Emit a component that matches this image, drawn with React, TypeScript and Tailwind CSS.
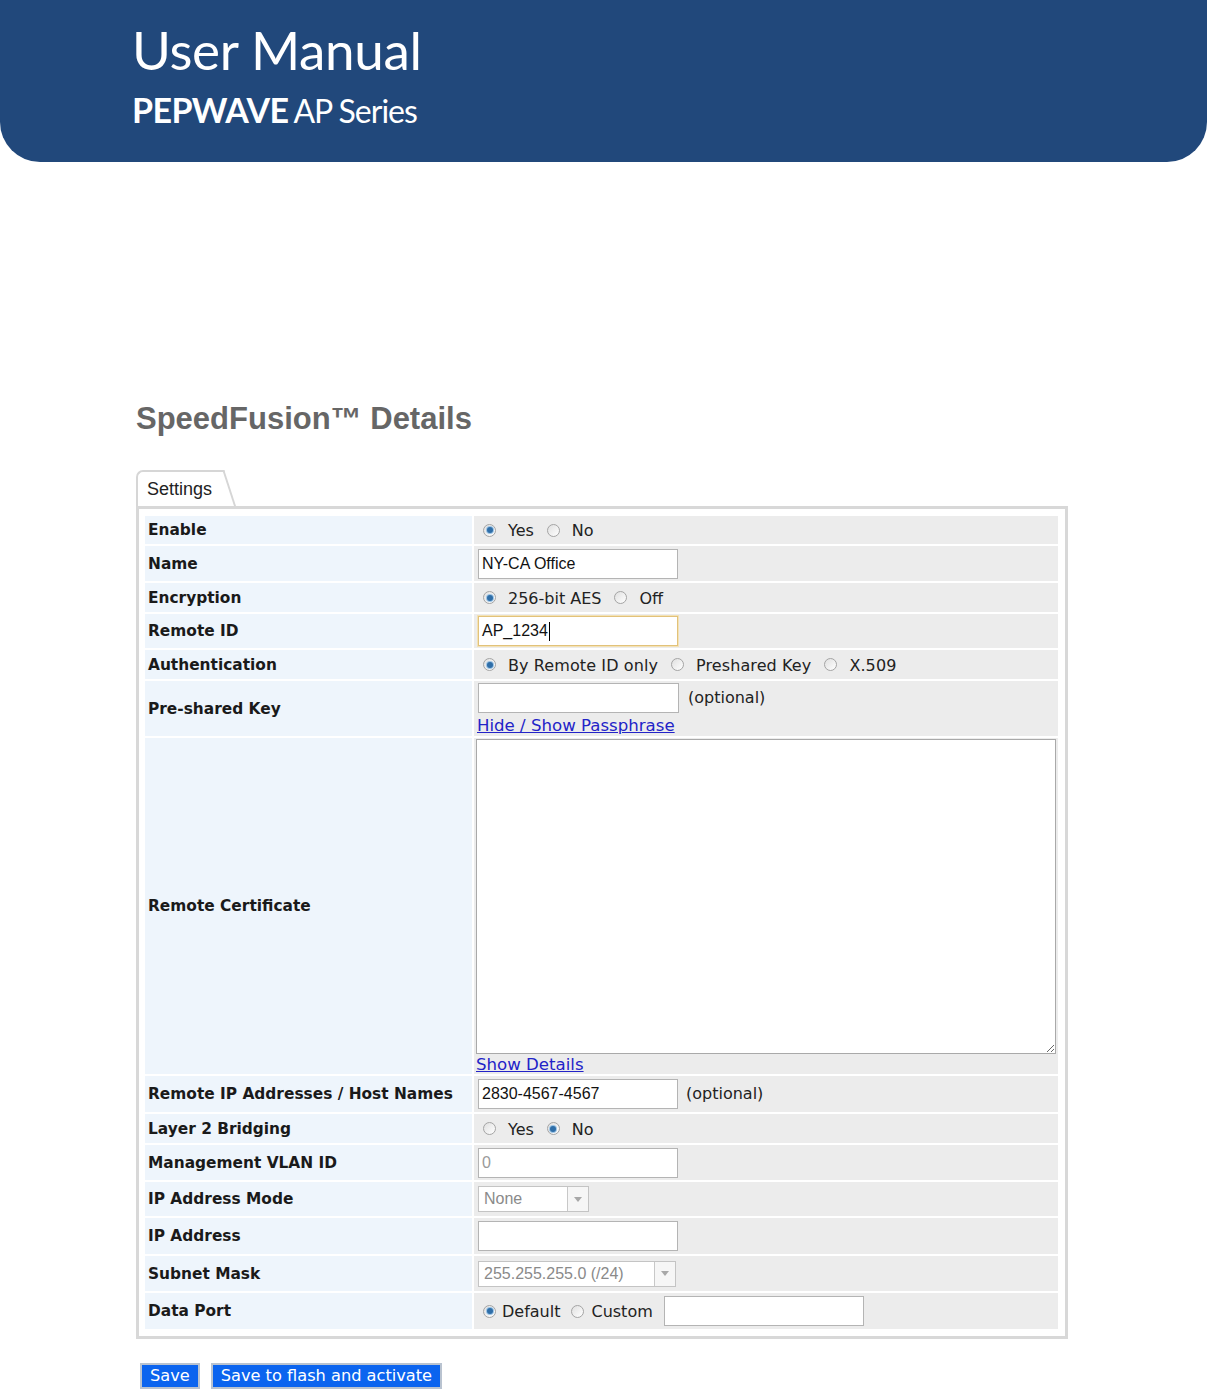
import React from "react";

const verdana = "font-['DejaVu_Sans',Verdana,sans-serif]";
const arial = "font-['Liberation_Sans',Arial,sans-serif]";

function Radio({ checked }: { checked?: boolean }) {
  return (
    <span className="inline-flex h-[13px] w-[13px] shrink-0 items-center justify-center rounded-full border border-[#a4a4a4] bg-gradient-to-br from-[#e0e0e0] to-white">
      {checked && <span className="h-[6px] w-[6px] rounded-full bg-[#2f6ea8] shadow-[0_0_0_1px_#9cc3e4]" />}
    </span>
  );
}

function Choice({ checked, label, gap = "gap-[12px]" }: { checked?: boolean; label: string; gap?: string }) {
  return (
    <span className={`inline-flex items-center ${gap}`}>
      <Radio checked={checked} />
      <span className="relative top-[1px]">{label}</span>
    </span>
  );
}

function TextBox({ value, muted, w = "w-[200px]" }: { value?: string; muted?: boolean; w?: string }) {
  return (
    <input
      readOnly
      value={value ?? ""}
      className={`${arial} ${w} h-[30px] border border-[#b4b4b4] bg-white px-[3px] text-[16px] outline-none ${
        muted ? "text-[#9a9a9a]" : "text-[#111]"
      }`}
    />
  );
}

function Select({ value, w }: { value: string; w: string }) {
  return (
    <div className={`${w} flex h-[26px] items-stretch border border-[#c4c4c4] bg-white`}>
      <span className={`${arial} flex-1 px-[5px] text-[16px] leading-[24px] text-[#8a8a8a]`}>{value}</span>
      <span className="flex w-[21px] items-center justify-center border-l border-[#c8c8c8] bg-[#f6f6f6]">
        <svg width="8" height="5" viewBox="0 0 8 5">
          <path d="M0 0 L8 0 L4 5 Z" fill="#a8a8a8" />
        </svg>
      </span>
    </div>
  );
}

function Row({ label, h, children, col = false }: { label: string; h: string; children: React.ReactNode; col?: boolean }) {
  return (
    <div className={`grid grid-cols-[327px_584px] gap-x-[2px] ${h}`}>
      <div className={`${verdana} flex items-center bg-[#eef5fc] pl-[3px] pt-[2px] text-[15.4px] font-bold text-[#1a1a1a]`}>{label}</div>
      <div
        className={`${verdana} flex bg-[#ececec] pl-[4px] text-[16px] text-[#222] ${
          col ? "flex-col justify-center" : "items-center"
        }`}
      >
        {children}
      </div>
    </div>
  );
}

const linkCls = `${verdana} text-[16.6px] leading-[18px] text-[#2323c8] underline`;
const btnCls = `${verdana} h-[26px] border-2 border-[#b9c3d0] bg-[#0b64ef] px-[8px] text-[16.2px] leading-[20px] text-white`;

export default function App() {
  return (
    <div className="min-h-[1391px] w-[1207px] bg-white">
      <header className="h-[162px] rounded-b-[40px] bg-[#21487b] pl-[132px] pt-[20px] font-['Lato',sans-serif] text-white">
        <div className="text-[53px] leading-[60px] tracking-[-0.3px]">User Manual</div>
        <div className="mt-[10px] flex items-baseline gap-[5px] leading-[40px]">
          <span className="text-[34px] font-bold tracking-[-0.6px]">PEPWAVE</span>
          <span className="text-[32px] tracking-[-1px]">AP Series</span>
        </div>
      </header>

      <main className="pl-[136px]">
        <h1 className={`${arial} mt-[241px] text-[31px] font-bold leading-[31px] text-[#666]`}>SpeedFusion™ Details</h1>

        <div className="mt-[36px] flex h-[36px] items-stretch">
          <div className={`${arial} flex items-center rounded-tl-[7px] border-l-2 border-t-2 border-[#d6d6d6] pl-[9px] pr-[10px] text-[18px] text-[#222]`}>
            Settings
          </div>
          <div className="w-[14px] origin-bottom-left skew-x-[18deg] border-r-2 border-t-2 border-[#d6d6d6]" />
        </div>

        <section className="w-[932px] border-[3px] border-[#d8d8d8] px-[6px] py-[7px]">
          <div className="flex flex-col gap-y-[2px] bg-white">
            <Row label="Enable" h="h-[28px]">
              <span className="flex gap-[13px] pl-[5px]">
                <Choice checked label="Yes" />
                <Choice label="No" />
              </span>
            </Row>
            <Row label="Name" h="h-[35px]">
              <TextBox value="NY-CA Office" />
            </Row>
            <Row label="Encryption" h="h-[29px]">
              <span className="flex gap-[13px] pl-[5px]">
                <Choice checked label="256-bit AES" />
                <Choice label="Off" />
              </span>
            </Row>
            <Row label="Remote ID" h="h-[34px]">
              <div className={`${arial} flex h-[30px] w-[200px] items-center border border-[#e2c27a] bg-white px-[3px] text-[16px] text-[#111] shadow-[0_0_0_1px_#f3e2b6]`}>
                AP_1234<span className="ml-[1px] h-[19px] w-[1px] bg-black" />
              </div>
            </Row>
            <Row label="Authentication" h="h-[29px]">
              <span className="flex gap-[13px] pl-[5px] tracking-[0.1px]">
                <Choice checked label="By Remote ID only" />
                <Choice label="Preshared Key" />
                <Choice label="X.509" />
              </span>
            </Row>
            <Row label="Pre-shared Key" h="h-[55px]" col>
              <div className="flex items-center gap-[9px]">
                <TextBox w="w-[201px]" />
                <span>(optional)</span>
              </div>
              <a className={`${linkCls} mt-[4px] -ml-[1px]`}>Hide / Show Passphrase</a>
            </Row>
            <Row label="Remote Certificate" h="h-[336px]" col>
              <textarea
                readOnly
                className="-ml-[2px] h-[315px] w-[580px] resize border border-[#a9a9a9] bg-white outline-none"
              />
              <a className={`${linkCls} mt-[2px] -ml-[2px]`}>Show Details</a>
            </Row>
            <Row label="Remote IP Addresses / Host Names" h="h-[36px]">
              <div className="flex items-center gap-[8px]">
                <TextBox value="2830-4567-4567" />
                <span>(optional)</span>
              </div>
            </Row>
            <Row label="Layer 2 Bridging" h="h-[29px]">
              <span className="flex gap-[13px] pl-[5px]">
                <Choice label="Yes" />
                <Choice checked label="No" />
              </span>
            </Row>
            <Row label="Management VLAN ID" h="h-[35px]">
              <TextBox value="0" muted />
            </Row>
            <Row label="IP Address Mode" h="h-[34px]">
              <Select value="None" w="w-[111px]" />
            </Row>
            <Row label="IP Address" h="h-[36px]">
              <TextBox />
            </Row>
            <Row label="Subnet Mask" h="h-[35px]">
              <Select value="255.255.255.0 (/24)" w="w-[198px]" />
            </Row>
            <Row label="Data Port" h="h-[36px]">
              <span className="flex items-center gap-[11px] pl-[5px]">
                <Choice checked label="Default" gap="gap-[6px]" />
                <Choice label="Custom" gap="gap-[7px]" />
                <TextBox w="w-[200px]" />
              </span>
            </Row>
          </div>
        </section>

        <div className="mt-[24px] flex gap-[11px] pl-[4px]">
          <button className={btnCls}>Save</button>
          <button className={btnCls}>Save to flash and activate</button>
        </div>
      </main>
    </div>
  );
}
